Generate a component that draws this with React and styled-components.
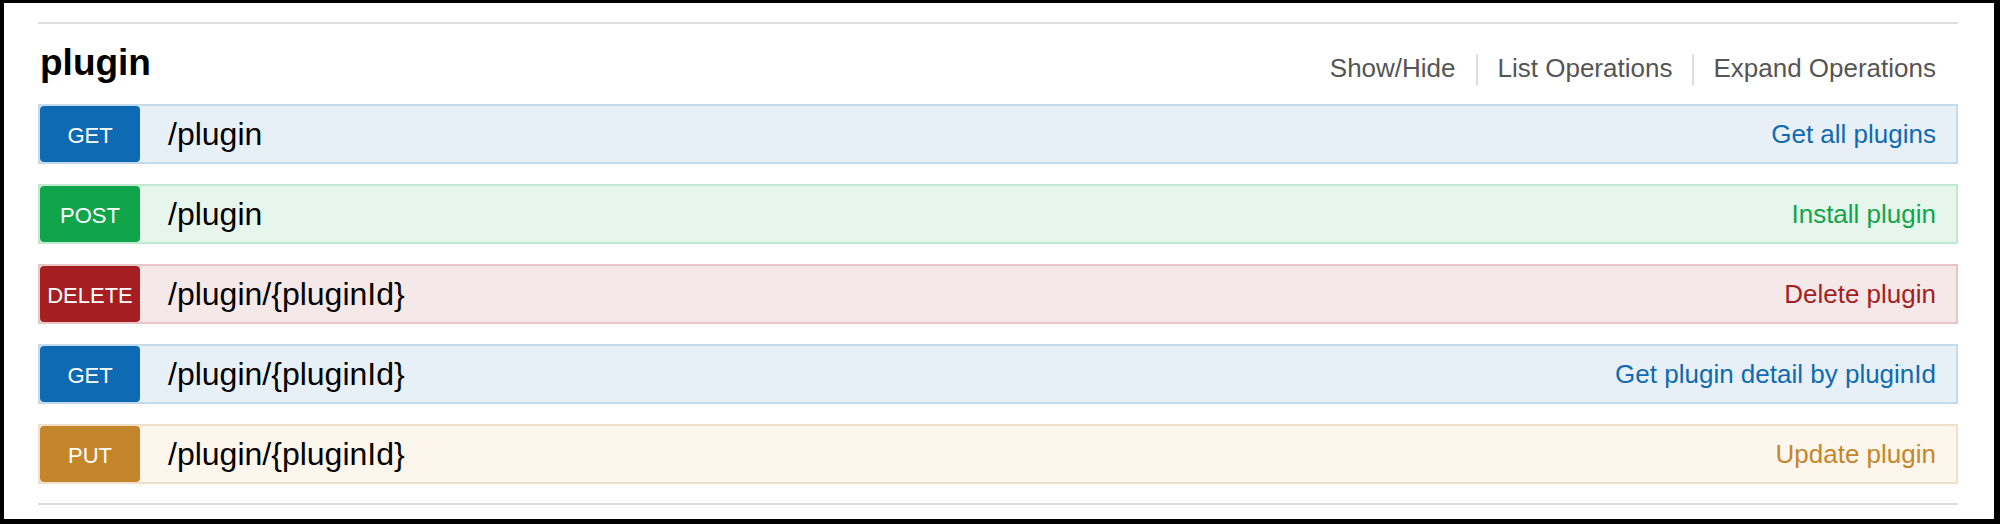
import React from "react";
import styled, { createGlobalStyle } from "styled-components";

const Global = createGlobalStyle`
  html, body { margin: 0; padding: 0; background: #fff; }
  body { font-family: "Liberation Sans", Arial, Helvetica, sans-serif; }
  * { box-sizing: border-box; }
`;

const Frame = styled.div`
  width: 2000px;
  height: 524px;
  border-style: solid;
  border-color: #000;
  border-width: 3px 6px 5px 4px;
  background: #fff;
  padding: 19px 36px 0 34px;
`;

const Resource = styled.section`
  border-top: 2px solid #ddd;
  border-bottom: 2px solid #ddd;
  padding-bottom: 19px;
`;

const Header = styled.div`
  height: 80px;
  display: flex;
  align-items: flex-start;
  justify-content: space-between;
`;

const Title = styled.h2`
  margin: 18.5px 0 0 2px;
  font-size: 37px;
  line-height: 40px;
  font-weight: bold;
  color: #000;
`;

const Options = styled.ul`
  list-style: none;
  margin: 30px 0 0 0;
  padding: 0;
  display: flex;
`;

const Option = styled.li`
  font-size: 26px;
  line-height: 29px;
  padding: 0 ${(p) => p.$pr}px 2px ${(p) => p.$pl}px;
  color: #555;
  border-left: ${(p) => (p.$first ? "none" : "2px solid #ddd")};
`;

const Operations = styled.div`
  display: flex;
  flex-direction: column;
  gap: 20px;
`;

const themes = {
  GET: { main: "#0f6ab4", bg: "#e7f0f7", border: "#c3d9ec" },
  POST: { main: "#10a54a", bg: "#e7f6ec", border: "#c3e8d1" },
  DELETE: { main: "#a41e22", bg: "#f5e8e8", border: "#e8c6c7" },
  PUT: { main: "#c5862b", bg: "#fcf6ed", border: "#f0e0ca" },
};

const Row = styled.div`
  height: 60px;
  display: flex;
  align-items: center;
  border: 2px solid ${(p) => themes[p.$method].border};
  background: ${(p) => themes[p.$method].bg};
`;

const Method = styled.span`
  width: 100px;
  height: 56px;
  flex: none;
  display: flex;
  align-items: center;
  justify-content: center;
  padding-top: 3px;
  border-radius: 4px;
  background: ${(p) => themes[p.$method].main};
  color: #fff;
  font-size: 22px;
`;

const Path = styled.span`
  margin-left: 28px;
  font-size: 32px;
  color: #000;
  flex: 1;
`;

const Summary = styled.span`
  margin-right: 20px;
  font-size: 26px;
  color: ${(p) => themes[p.$method].main};
`;

const ops = [
  { method: "GET", path: "/plugin", summary: "Get all plugins" },
  { method: "POST", path: "/plugin", summary: "Install plugin" },
  { method: "DELETE", path: "/plugin/{pluginId}", summary: "Delete plugin" },
  { method: "GET", path: "/plugin/{pluginId}", summary: "Get plugin detail by pluginId" },
  { method: "PUT", path: "/plugin/{pluginId}", summary: "Update plugin" },
];

export default function App() {
  return (
    <>
      <Global />
      <Frame>
        <Resource>
          <Header>
            <Title>plugin</Title>
            <Options>
              <Option $first $pl={0} $pr={20}>Show/Hide</Option>
              <Option $pl={20} $pr={20}>List Operations</Option>
              <Option $pl={19} $pr={22}>Expand Operations</Option>
            </Options>
          </Header>
          <Operations>
            {ops.map((op, i) => (
              <Row key={i} $method={op.method}>
                <Method $method={op.method}>{op.method}</Method>
                <Path>{op.path}</Path>
                <Summary $method={op.method}>{op.summary}</Summary>
              </Row>
            ))}
          </Operations>
        </Resource>
      </Frame>
    </>
  );
}
